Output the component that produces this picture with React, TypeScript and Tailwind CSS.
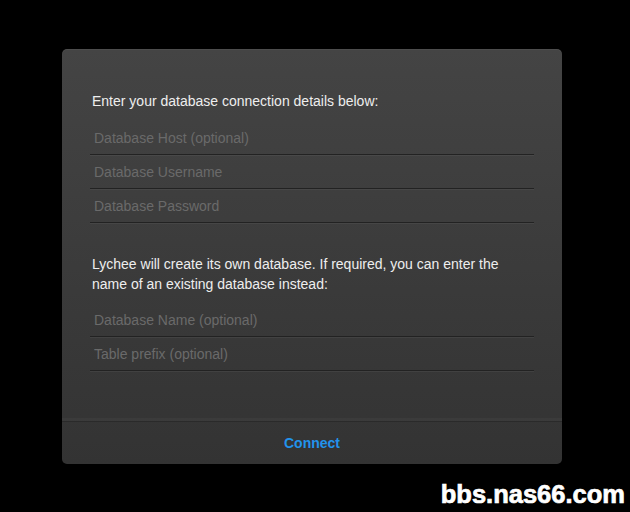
import React from "react";

const Field = ({ placeholder }: { placeholder: string }) => (
  <input
    type="text"
    placeholder={placeholder}
    className="block w-full h-[34px] bg-transparent px-[4px] text-[14px] text-white outline-none border-b border-[#222] shadow-[0_1px_0_rgba(255,255,255,0.05)] placeholder:text-[#6a6a6a]"
    style={{ fontFamily: '"Liberation Sans", Arial, sans-serif' }}
  />
);

export default function App() {
  return (
    <div
      className="relative min-h-[512px] w-[630px] bg-black pt-[49px] pl-[62px]"
      style={{ fontFamily: '"Liberation Sans", Arial, sans-serif' }}
    >
      <div className="w-[500px] h-[415px] rounded-[5px] bg-gradient-to-b from-[#444] to-[#333] shadow-[0_1px_4px_rgba(0,0,0,0.2),inset_0_1px_0_rgba(255,255,255,0.05)] flex flex-col">
        <div className="flex-1 pt-[42px] px-[30px]">
          <p className="text-[14px] leading-[20px] text-[#eee]">
            Enter your database connection details below:
          </p>
          <div className="mt-[10px] -mx-[2px] w-[444px]">
            <Field placeholder="Database Host (optional)" />
            <Field placeholder="Database Username" />
            <Field placeholder="Database Password" />
          </div>
          <p className="mt-[31px] text-[14px] leading-[20px] text-[#eee]">
            Lychee will create its own database. If required, you can enter the
            name of an existing database instead:
          </p>
          <div className="mt-[9px] -mx-[2px] w-[444px]">
            <Field placeholder="Database Name (optional)" />
            <Field placeholder="Table prefix (optional)" />
          </div>
        </div>
        <div className="h-[43px] flex items-center justify-center border-t border-[#2a2a2a] shadow-[0_-3px_0_rgba(255,255,255,0.03)]">
          <button className="text-[14px] font-bold text-[#2293ec]">Connect</button>
        </div>
      </div>
      <div
        className="absolute right-[5px] bottom-[5px] text-[25.5px] font-bold leading-none text-white [-webkit-text-stroke:0.7px_white]"
        style={{ fontFamily: '"Liberation Sans", Arial, sans-serif' }}
      >
        bbs.nas66.com
      </div>
    </div>
  );
}
